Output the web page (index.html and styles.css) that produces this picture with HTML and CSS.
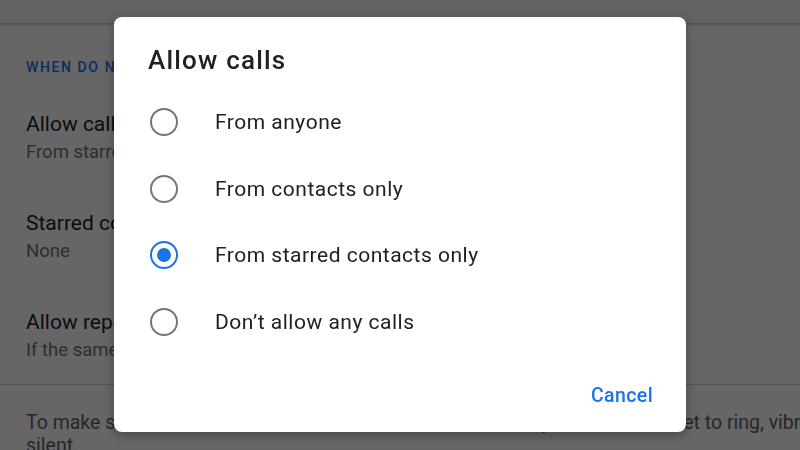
FILE: index.html
```html
<!DOCTYPE html>
<html lang="en">
<head>
<meta charset="utf-8">
<title>Allow calls</title>
<link rel="stylesheet" href="styles.css">
</head>
<body>
<div class="page">
  <header class="appbar"></header>
  <main class="content">
    <h2 class="section-label">WHEN DO NOT DISTURB IS ON</h2>
    <div class="pref">
      <div class="pref-title">Allow calls</div>
      <div class="pref-summary">From starred contacts only</div>
    </div>
    <div class="pref">
      <div class="pref-title">Starred contacts</div>
      <div class="pref-summary">None</div>
    </div>
    <div class="pref">
      <div class="pref-title">Allow repeat callers</div>
      <div class="pref-summary">If the same person calls a second time within a 15 minute period</div>
    </div>
  </main>
  <div class="divider"></div>
  <p class="footer-note">To make <span class="note-mid">sure allowed calls make sound, check whether your device is</span> set to ring, vibrate, or silent.</p>
</div>

<div class="scrim"></div>

<div class="dialog" role="dialog" aria-labelledby="dlg-title">
  <h1 class="dialog-title" id="dlg-title">Allow calls</h1>
  <ul class="options">
    <li class="option"><span class="radio"></span><span class="option-label">From anyone</span></li>
    <li class="option"><span class="radio"></span><span class="option-label">From contacts only</span></li>
    <li class="option"><span class="radio checked"></span><span class="option-label">From starred contacts only</span></li>
    <li class="option"><span class="radio"></span><span class="option-label">Don’t allow any calls</span></li>
  </ul>
  <div class="actions">
    <button class="text-button">Cancel</button>
  </div>
</div>
</body>
</html>
```

FILE: styles.css
```css
* { box-sizing: border-box; }

html, body {
  margin: 0;
  padding: 0;
  width: 800px;
  height: 450px;
  overflow: hidden;
  background: #ffffff;
  font-family: Roboto, "Liberation Sans", Arial, sans-serif;
}

.page {
  width: 800px;
  height: 450px;
  overflow: hidden;
  background: #ffffff;
}

.appbar {
  height: 23px;
  background: #f5f5f5;
  box-shadow: 0 1px 3px rgba(0, 0, 0, 0.35);
}

.content {
  padding: 34px 0 0 26px;
}

.section-label {
  margin: 0 0 33px 0;
  font-size: 14px;
  line-height: 20px;
  font-weight: 500;
  letter-spacing: 1.6px;
  color: #1a73e8;
  white-space: nowrap;
}

.pref {
  margin-bottom: 42px;
  white-space: nowrap;
}

.pref:last-child {
  margin-bottom: 0;
}

.pref-title {
  font-size: 21px;
  line-height: 28px;
  color: #202124;
}

.pref-summary {
  font-size: 18.5px;
  line-height: 29px;
  color: #6f7377;
}

.divider {
  height: 1px;
  margin-top: 19px;
  background: #d0d0d0;
}

.footer-note {
  margin: 26px 0 0 26px;
  width: 860px;
  font-size: 19.5px;
  line-height: 23px;
  color: #5f6368;
}

.note-mid {
  word-spacing: 4.4px;
}

.scrim {
  position: fixed;
  inset: 0;
  background: rgba(0, 0, 0, 0.6);
}

.dialog {
  position: fixed;
  left: 114px;
  top: 17px;
  width: 572px;
  height: 415px;
  background: #ffffff;
  border-radius: 8px;
  box-shadow: 0 4px 12px rgba(0, 0, 0, 0.3);
  padding: 27px 33px 0 34px;
  display: flex;
  flex-direction: column;
}

.dialog-title {
  margin: 0;
  font-size: 26px;
  line-height: 32px;
  font-weight: 500;
  letter-spacing: 1.2px;
  color: #202124;
}

.options {
  list-style: none;
  margin: 12.7px 0 0 0;
  padding: 0;
}

.option {
  height: 66.6px;
  display: flex;
  align-items: center;
  padding-left: 2px;
}

.radio {
  width: 28px;
  height: 28px;
  border-radius: 50%;
  border: 2.75px solid #767676;
  display: flex;
  align-items: center;
  justify-content: center;
  flex: none;
}

.radio.checked {
  border-color: #1a73e8;
}

.radio.checked::after {
  content: "";
  width: 14px;
  height: 14px;
  border-radius: 50%;
  background: #1a73e8;
}

.option-label {
  margin-left: 37px;
  font-size: 21px;
  letter-spacing: 0.5px;
  color: #202124;
}

.actions {
  margin-top: auto;
  height: 76px;
  display: flex;
  justify-content: flex-end;
  align-items: flex-start;
}

.text-button {
  border: none;
  background: none;
  padding: 0;
  margin-top: 28px;
  font-family: inherit;
  font-size: 19.5px;
  line-height: 24px;
  font-weight: 500;
  letter-spacing: 0.4px;
  color: #1a73e8;
  cursor: pointer;
}
```
